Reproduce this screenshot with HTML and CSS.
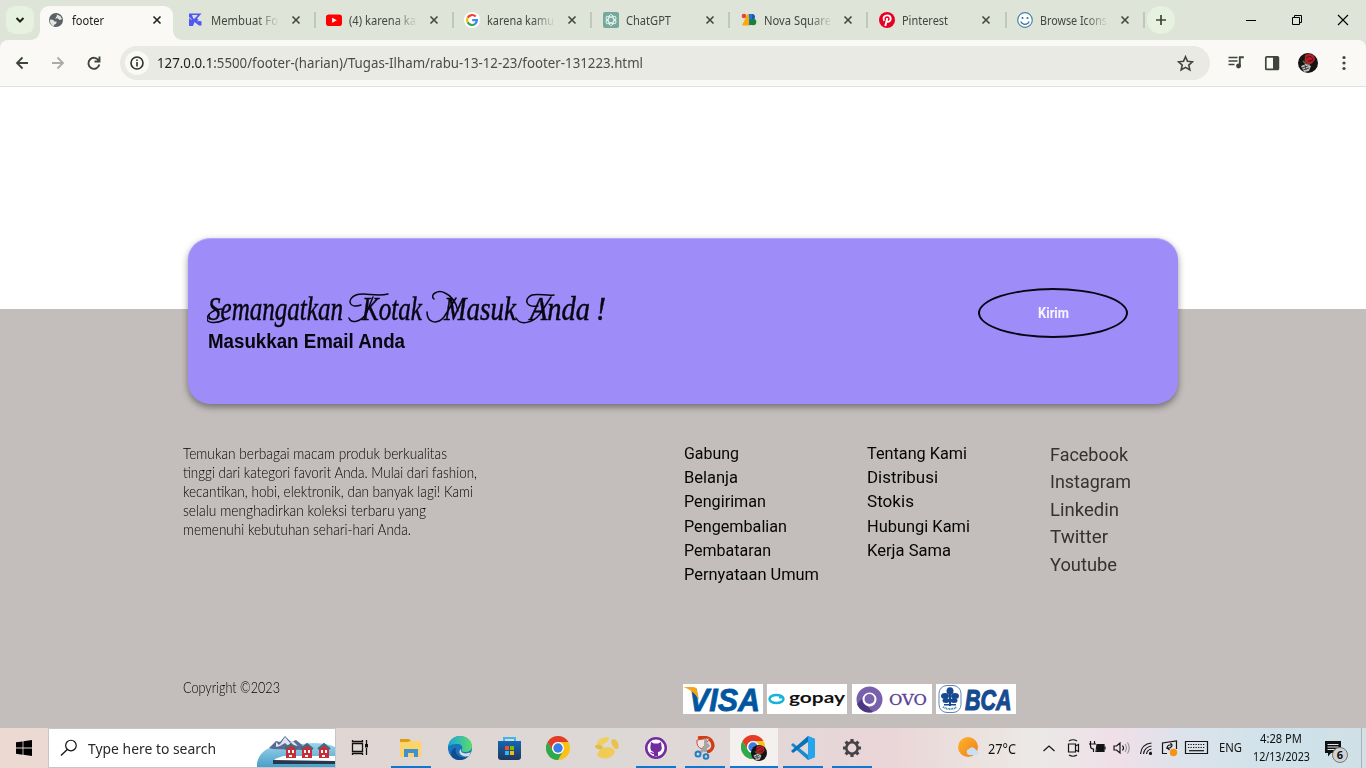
FILE: index.html
```html
<!DOCTYPE html>
<html lang="id">
<head>
<meta charset="utf-8">
<title>footer</title>
<link rel="stylesheet" href="styles.css">
</head>
<body>
<svg class="defs" width="0" height="0" aria-hidden="true">
  <defs>
    <symbol id="x" viewBox="0 0 10 10"><path d="M1.500 1.500l7 7M8.500 1.500l-7 7" stroke="currentColor" stroke-width="1.600" fill="none"/></symbol>
    <symbol id="chrome" viewBox="0 0 24 24">
      <circle cx="12" cy="12" r="12" fill="#fbc116"/>
      <path d="M1.600 6A12 12 0 0 1 22.400 6H12a6 6 0 0 0-5.200 9z" fill="#e33b2e"/>
      <path d="M1.600 6A12 12 0 0 0 12 24l5.200-9A6 6 0 0 1 6.800 15z" fill="#2da94f"/>
      <circle cx="12" cy="12" r="6" fill="#fff"/><circle cx="12" cy="12" r="4.700" fill="#3a7de8"/>
    </symbol>
    <symbol id="rose" viewBox="0 0 20 20">
      <circle cx="10" cy="10" r="10" fill="#151314"/>
      <path d="M7 2l4-1.500 5 2 1 4-3 4-4 1-3.500-3z" fill="#b3202a"/>
      <path d="M8 5l4-2 3 3-3 3M10 8l5-1" stroke="#5e0d14" fill="none"/>
      <path d="M5 8l3 3 4 1" stroke="#3f7a37" stroke-width="1.500" fill="none"/>
      <path d="M3 13l5-2 5 2-2 5-5 1z" fill="#bdbabd"/>
      <path d="M4 15l6-2M5 17l6-2M7 12l1 5" stroke="#3b393b" stroke-width=".9"/>
    </symbol>
    <linearGradient id="gEdge" x1="0" y1="0" x2="1" y2="0"><stop offset="0" stop-color="#1aa5dc"/><stop offset="1" stop-color="#5bdc6b"/></linearGradient>
    <linearGradient id="gSun" x1="0" y1="0" x2="1" y2="1"><stop offset="0" stop-color="#fdb52a"/><stop offset="1" stop-color="#f07e1b"/></linearGradient>
    <linearGradient id="gLake" x1="0" y1="0" x2="0" y2="1"><stop offset="0" stop-color="#9ad4ea"/><stop offset="1" stop-color="#4b9fca"/></linearGradient>
    <linearGradient id="gStore" x1="0" y1="0" x2="0" y2="1"><stop offset="0" stop-color="#1267b5"/><stop offset="1" stop-color="#20365c"/></linearGradient>
  </defs>
</svg>

<header class="tabstrip">
  <button class="tab-search"><svg width="10" height="8" viewBox="0 0 10 8"><path d="M1.500 2L5 5.500 8.500 2" fill="none" stroke="#1d211c" stroke-width="2"/></svg></button>
  <div class="tab tab-active">
    <svg class="fav" viewBox="0 0 16 16"><circle cx="8" cy="8" r="7" fill="#5b6066"/><path d="M8.500 1.500L6.500 4l1.800 1.500L6 7.500 2 7l.5 2.500L6 10l1 4.500 2-2.500.5-2.500-2-1.700" fill="none" stroke="#5b6066"/><path d="M1.800 7.500l3 .3 2 1.700h2L8 12l-2 .8v1.500C3.500 13.500 1.600 11 1.800 7.500zM9 2.500l3.500 1.700 1.500 3-2.500.8-2-1.800-2.500.5 1.500-2z" fill="#e4e4e1"/></svg>
    <span class="title"><span class="fit" data-w="32">footer</span></span><svg class="close"><use href="#x"/></svg>
  </div>
  <div class="tab">
    <svg class="fav" viewBox="0 0 16 16"><path d="M1 1.500h12.500L9 6.500l3 2.500 1.500.5v4H11l-4.500-3.500L5 14H1z" fill="#5157f5"/><path d="M4.500 3.500H9L6 6.500zM1 5.500l2.500 2M9.500 9l3-1" stroke="#dfe4d9" fill="#dfe4d9" stroke-width="1"/></svg>
    <span class="title fade"><span class="fit" data-w="67">Membuat Fo</span></span><svg class="close"><use href="#x"/></svg>
  </div>
  <div class="tab">
    <svg class="fav" viewBox="0 0 16 16"><rect y="2.500" width="16" height="11.500" rx="2.800" fill="#f00"/><path d="M6.200 5.800v5L10.800 8.300z" fill="#fff"/></svg>
    <span class="title fade"><span class="fit" data-w="67">(4) karena ka</span></span><svg class="close"><use href="#x"/></svg>
  </div>
  <div class="tab">
    <svg class="fav" viewBox="0 0 16 16"><circle cx="8" cy="8" r="8" fill="#fff"/><g fill="none" stroke-width="2.200"><path d="M3.700 5.700A4.900 4.900 0 0 1 11.700 4.600" stroke="#ea4335"/><path d="M3.700 5.600a5 5 0 0 0 0 4.800" stroke="#fbbc05"/><path d="M3.600 10.300a4.900 4.900 0 0 0 7.600 1.500" stroke="#34a853"/><path d="M11 11.900A4.800 4.800 0 0 0 12.900 8.200H8.200" stroke="#4285f4"/></g></svg>
    <span class="title fade"><span class="fit" data-w="67">karena kamu</span></span><svg class="close"><use href="#x"/></svg>
  </div>
  <div class="tab">
    <svg class="fav" viewBox="0 0 16 16"><rect width="16" height="16" rx="2" fill="#74a99b"/><g fill="none" stroke="#e9f3ef" stroke-width=".9"><ellipse cx="8" cy="8" rx="2.700" ry="5.500"/><ellipse cx="8" cy="8" rx="2.700" ry="5.500" transform="rotate(60 8 8)"/><ellipse cx="8" cy="8" rx="2.700" ry="5.500" transform="rotate(120 8 8)"/></g></svg>
    <span class="title"><span class="fit" data-w="45">ChatGPT</span></span><svg class="close"><use href="#x"/></svg>
  </div>
  <div class="tab">
    <svg class="fav" viewBox="0 0 16 16"><circle cx="3" cy="4" r="2.300" fill="#ea4335"/><path d="M6.500 2H9v11.500H1z" fill="#f9ab00"/><path d="M8 2h4v6H8z" fill="#1a73e8"/><path d="M11 2a3 3 0 0 1 0 6z" fill="#1558c0"/><path d="M8 7h4v6H8z" fill="#1a73e8"/><circle cx="12" cy="10" r="3.300" fill="#188038"/></svg>
    <span class="title fade"><span class="fit" data-w="67">Nova Square</span></span><svg class="close"><use href="#x"/></svg>
  </div>
  <div class="tab">
    <svg class="fav" viewBox="0 0 16 16"><circle cx="8" cy="8" r="8" fill="#e60023"/><path d="M5 8.800C3.500 5.500 5.500 3.400 8.200 3.400c4.600 0 4.300 6.300 1 6.300-1.200 0-1.500-.8-1.500-.8M8.300 6L6.300 14" fill="none" stroke="#fff" stroke-width="1.900"/></svg>
    <span class="title"><span class="fit" data-w="46">Pinterest</span></span><svg class="close"><use href="#x"/></svg>
  </div>
  <div class="tab">
    <svg class="fav" viewBox="0 0 16 16"><circle cx="8" cy="8" r="7.300" fill="#fff" stroke="#4585ab" stroke-width="1.200"/><circle cx="5.500" cy="6" r="1.100" fill="#39789f"/><circle cx="10.500" cy="6" r="1.100" fill="#39789f"/><path d="M3.800 9.500c1.500 3.700 6.900 3.700 8.400 0" fill="none" stroke="#39789f" stroke-width="1.200"/></svg>
    <span class="title fade"><span class="fit" data-w="67">Browse Icons</span></span><svg class="close"><use href="#x"/></svg>
  </div>
  <button class="new-tab"><svg width="12" height="12" viewBox="0 0 12 12"><path d="M6 1v10M1 6h10" stroke="#3c4439" stroke-width="1.700"/></svg></button>
  <div class="win">
    <svg width="46" height="40"><path d="M18 20.500h10" stroke="#000"/></svg>
    <svg width="46" height="40"><path d="M18.500 17.500h7v7h-7zM20.500 17v-1.500h7v7H26" fill="none" stroke="#000"/></svg>
    <svg width="46" height="40"><path d="M18 15l10 10M28 15L18 25" stroke="#000" stroke-width="1.100"/></svg>
  </div>
</header>

<nav class="toolbar">
  <svg class="tool" viewBox="0 0 36 36"><path d="M28 18H17.500M22.500 12.500L17 18l5.500 5.500" fill="none" stroke="#3e463c" stroke-width="1.800"/></svg>
  <svg class="tool" viewBox="0 0 36 36"><path d="M16 18h11M21.500 12.500L27 18l-5.500 5.500" fill="none" stroke="#aaada7" stroke-width="1.800"/></svg>
  <svg class="tool" viewBox="0 0 36 36"><path d="M26.700 15.600A5.500 5.500 0 1 0 27.300 19.500M27.500 11.500v5h-5" fill="none" stroke="#3e463c" stroke-width="1.900"/></svg>
  <div class="omnibox">
    <span class="info"><svg width="14" height="14" viewBox="0 0 14 14"><circle cx="7" cy="7" r="6" fill="none" stroke="#2b302a" stroke-width="1.600"/><path d="M7 6v4.500M7 3.500v1.500" stroke="#2b302a" stroke-width="1.600"/></svg></span>
    <span class="url"><span class="fit" data-w="486"><b>127.0.0.1</b>:5500/footer-(harian)/Tugas-Ilham/rabu-13-12-23/footer-131223.html</span></span>
    <svg class="star" viewBox="0 0 16 16"><path d="M8 1.600l1.900 4.300 4.700.5-3.500 3.100 1 4.600L8 11.700l-4.100 2.400 1-4.600L1.400 6.400l4.700-.5z" fill="none" stroke="#3e463c" stroke-width="1.500"/></svg>
  </div>
  <div class="actions">
    <svg viewBox="0 0 36 36"><path d="M10.500 12.500h9M10.500 16h9M10.500 19.500h6" stroke="#3e463c" stroke-width="1.600"/><path d="M21.800 22V12.300h4" stroke="#3e463c" stroke-width="1.900" fill="none"/><circle cx="20.500" cy="21" r="2.400" fill="#3e463c"/></svg>
    <svg viewBox="0 0 36 36"><rect x="11.800" y="11.800" width="12.600" height="12.600" rx="1" fill="none" stroke="#3e463c" stroke-width="1.700"/><path d="M19 11h5v14h-5z" fill="#3e463c"/></svg>
    <svg viewBox="0 0 36 36"><use href="#rose" x="8" y="8" width="20" height="20"/></svg>
    <svg viewBox="0 0 36 36"><g fill="#3e463c"><circle cx="18" cy="12.500" r="1.600"/><circle cx="18" cy="18" r="1.600"/><circle cx="18" cy="23.500" r="1.600"/></g></svg>
  </div>
</nav>

<main class="page">
  <section class="card">
    <div>
      <h1 class="headline">
        <svg class="swash" viewBox="207 288 400 42" fill="none" stroke="#070612" stroke-width="1.500" stroke-linecap="round"><path d="M222 309c-9 0-15 6-15 10 0 4 9 5 17 1"/><path d="M349 318c2 6 12 4 17-4l7-17M361 305c-12 4-15-6-5-10 8-3 20 2 32-1"/><path d="M427 312c0 11 10 13 17 5l12-19M434 299c-5-4 4-10 11-6 7 3 11 9 13 18"/><path d="M516 318c4 8 17 5 24-4l11-17M538 306c-12 2-15-7-6-11 6-2 14 1 22 0"/></svg>
        <span class="fit" data-w="135" data-gap="19">Semangatkan</span><span class="fit" data-w="60" data-gap="22">Kotak</span><span class="fit" data-w="72" data-gap="14">Masuk</span><span class="fit" data-w="60" data-gap="6">Anda</span><span class="fit" data-w="10">!</span></h1>
      <p class="prompt"><span class="fit" data-w="197">Masukkan Email Anda</span></p>
    </div>
    <button class="send"><span class="fit" data-w="31">Kirim</span></button>
  </section>
  <footer class="footer">
    <p class="about">
      <span class="fit" data-w="264">Temukan berbagai macam produk berkualitas</span>
      <span class="fit" data-w="294">tinggi dari kategori favorit Anda. Mulai dari fashion,</span>
      <span class="fit" data-w="290">kecantikan, hobi, elektronik, dan banyak lagi! Kami</span>
      <span class="fit" data-w="243">selalu menghadirkan koleksi terbaru yang</span>
      <span class="fit" data-w="228">memenuhi kebutuhan sehari-hari Anda.</span>
    </p>
    <ul class="links">
      <li><a class="fit" data-w="55">Gabung</a></li><li><a class="fit" data-w="54">Belanja</a></li><li><a class="fit" data-w="82">Pengiriman</a></li><li><a class="fit" data-w="103">Pengembalian</a></li><li><a class="fit" data-w="87">Pembataran</a></li><li><a class="fit" data-w="135">Pernyataan Umum</a></li>
    </ul>
    <ul class="links">
      <li><a class="fit" data-w="100">Tentang Kami</a></li><li><a class="fit" data-w="71">Distribusi</a></li><li><a class="fit" data-w="47">Stokis</a></li><li><a class="fit" data-w="103">Hubungi Kami</a></li><li><a class="fit" data-w="84">Kerja Sama</a></li>
    </ul>
    <ul class="links social">
      <li><a class="fit" data-w="78">Facebook</a></li><li><a class="fit" data-w="81">Instagram</a></li><li><a class="fit" data-w="69">Linkedin</a></li><li><a class="fit" data-w="58">Twitter</a></li><li><a class="fit" data-w="67">Youtube</a></li>
    </ul>
    <p class="copy"><span class="fit" data-w="97">Copyright ©2023</span></p>
    <div class="pay">
      <svg viewBox="0 0 80 30"><rect width="80" height="30" fill="#fff"/><text x="6" y="26.500" font-size="32" font-weight="700" font-style="italic" textLength="71" lengthAdjust="spacingAndGlyphs" fill="#0057a0" stroke="#0057a0" stroke-width=".8" class="sans">VISA</text><path d="M0 3h10c3 0 4 2 4.500 5l1.500 8C12 9 7 5 0 3z" fill="#f9a51a"/></svg>
      <svg viewBox="0 0 80 30"><rect width="80" height="30" fill="#fff"/><ellipse cx="9.500" cy="15" rx="7" ry="4" fill="#fff" stroke="#12b5d8" stroke-width="2.500"/><path d="M12 12.500h3v2h-3z" fill="#12b5d8"/><text x="22" y="18.500" font-size="14.500" font-weight="700" textLength="56" lengthAdjust="spacingAndGlyphs" fill="#111" class="geo">gopay</text></svg>
      <svg viewBox="0 0 80 30"><rect width="80" height="30" fill="#fff"/><circle cx="17.500" cy="15.500" r="10" fill="none" stroke="#7860ac" stroke-width="6"/><path d="M5 20a13 13 0 0 0 16 8l-6-6a8 8 0 0 1-5-7z" fill="#4b3880"/><circle cx="17.500" cy="15" r="5" fill="#7a63ae"/><text x="37" y="20.500" font-size="14" textLength="38" lengthAdjust="spacingAndGlyphs" fill="#5b4195" stroke="#5b4195" stroke-width=".3" class="slab">OVO</text></svg>
      <svg viewBox="0 0 80 30"><rect width="80" height="30" fill="#fff"/><rect x="3" y="1.500" width="22" height="27" rx="8" fill="#fff" stroke="#4c78ad" stroke-width=".9"/><g fill="#174a90"><ellipse cx="14" cy="7" rx="3.500" ry="3.800"/><ellipse cx="9" cy="12" rx="4" ry="3"/><ellipse cx="19" cy="12" rx="4" ry="3"/><ellipse cx="10" cy="16.500" rx="3.500" ry="2.500"/><ellipse cx="18" cy="16.500" rx="3.500" ry="2.500"/><path d="M13 8h2v14h-2zM8 20h12v1.500H8z"/></g><path d="M7 23q7 4 14 0" fill="none" stroke="#4c78ad" stroke-dasharray="1 .6" stroke-width="1.800"/><text x="29" y="26.300" font-size="30" font-weight="700" font-style="italic" textLength="46.500" lengthAdjust="spacingAndGlyphs" fill="#164b91" stroke="#164b91" stroke-width="1.200" class="sans">BCA</text></svg>
    </div>
  </footer>
</main>

<div class="taskbar">
  <div class="start"><svg width="16" height="16" viewBox="0 0 16 16"><path d="M0 2.300L6.600 1.400v6.200H0zM7.400 1.300L16 0v7.600H7.400zM0 8.400h6.600v6.300L0 13.800zM7.400 8.400H16V16l-8.600-1.200z"/></svg></div>
  <div class="search">
    <svg width="18" height="18" viewBox="0 0 18 18"><circle cx="11" cy="6.500" r="5.300" fill="none" stroke="#111" stroke-width="1.200"/><path d="M7.300 10.500L1 16.500" stroke="#111" stroke-width="1.300"/></svg>
    <span class="hint"><span class="fit" data-w="128">Type here to search</span></span>
    <svg class="art" viewBox="0 0 78 38"><path d="M0 38V34C2 24 9 19 20 17l36-3q14 0 22 4v20z" fill="url(#gLake)"/><path d="M12 19L19 12l4 1 5-6 6 6 5-2 5 4 5 5-3 1-30-1z" fill="#596b91"/><path d="M19 13l3 3 2-2 4-6 5 6 3-2 5 5-5-1-3 2-5-4-5 3-4 1z" fill="#dde5f1"/><path d="M18 30l8-3h52v5H17z" fill="#fff"/><path d="M16 31l62 1v3H16z" fill="#26384e"/><path d="M29 20l5-4 5 4v9H29zM45 20l5-4 5 4v9H45zM62 20l5-4 5 4v9H62z" fill="#ca2c38"/><path d="M28 20l6-5 6 5M44 20l6-5 6 5M61 20l6-5 6 5" fill="none" stroke="#386d82" stroke-width="2"/><path d="M31 21h2v3h-2zM35 21h2v3h-2zM47 21h2v3h-2zM51 21h2v3h-2zM64 21h2v3h-2zM68 21h2v3h-2zM32 26h3v2h-3zM48 26h3v2h-3zM65 26h3v2h-3z" fill="#fff"/></svg>
  </div>
  <div class="app view"><svg width="18" height="18" viewBox="0 0 18 18" fill="none" stroke="#111" stroke-width="1.300"><path d="M1.500 4.500h10v8h-10zM1.500 1v1.500h10V1M1.500 16v-1.500h10V16M15.500 1v4M15.500 9v7"/><path d="M14 5h3v3.500h-3z" fill="#111" stroke="none"/></svg></div>
  <div class="app run"><svg width="24" height="24" viewBox="0 0 24 24"><path d="M1 3h9l2 2v3H1z" fill="#dc9c13"/><path d="M1 6h8l2-1h11v16H1z" fill="#fcd469"/><path d="M5 21v-8h14v8h-4v-4h-6v4z" fill="#3f91d0"/></svg></div>
  <div class="app"><svg width="24" height="24" viewBox="0 0 24 24"><circle cx="12" cy="12" r="12" fill="#1875bd"/><path d="M0 11C1 4 6 0 12 0c7 0 12 5 12 10 0 4-3 6-7 6-3 0-4-1-3-3 1-3-1-5-5-5-4 0-8 1-9 3z" fill="url(#gEdge)"/><path d="M8 12c-2 6 4 11 11 9-4 4-10 4-14 1-4-4-1-10 3-10z" fill="#134b90"/><path d="M13 13c-1 4 4 6 10 3l-2 4c-8 2-12-4-8-7z" fill="#dfdad9"/></svg></div>
  <div class="app"><svg width="24" height="24" viewBox="0 0 24 24"><path d="M7 6V2h11v4" fill="none" stroke="#40b6ef" stroke-width="2"/><path d="M1 5h23v16q0 3-3 3H4q-3 0-3-3z" fill="url(#gStore)"/><path d="M8 10h4v4H8z" fill="#f25022"/><path d="M13 10h4v4h-4z" fill="#7fba00"/><path d="M8 15h4v4H8z" fill="#36b4f1"/><path d="M13 15h4v4h-4z" fill="#ffb900"/></svg></div>
  <div class="app"><svg width="24" height="24"><use href="#chrome"/></svg></div>
  <div class="app"><svg width="24" height="24" viewBox="0 0 24 24"><ellipse cx="8" cy="5" rx="6.500" ry="3" transform="rotate(-28 8 5)" fill="#efd05f"/><ellipse cx="4" cy="11" rx="4" ry="2.300" transform="rotate(15 4 11)" fill="#e5bd46"/><ellipse cx="20" cy="8" rx="3" ry="5.500" transform="rotate(-28 20 8)" fill="#e8c24b"/><path d="M2 20c1-6 6-9 11-9 6 1 8 4 6 7-4 5-10 6-17 2z" fill="#f0cc57"/></svg></div>
  <div class="app run"><svg width="22" height="22" viewBox="0 0 22 22"><circle cx="11" cy="11" r="11" fill="#752ba0"/><circle cx="11" cy="11" r="8.500" fill="#fff"/><path d="M6 5l3 1.500h4L16 5l.5 4c1 4-1 5.500-3.500 6v4H9v-2c-2 .5-3-1-4-2 2 0 2 1 4 .5V15c-3-.5-4-3-3.500-6z" fill="#752ba0"/></svg></div>
  <div class="app run"><svg width="22" height="24" viewBox="0 0 22 24"><path d="M4 2q14-3 15 8-1 5-6 6" fill="none" stroke="#d23c13" stroke-width="3.300"/><path d="M3 4q-1 7 5 9l8-11z" fill="#e9e6e7" stroke="#cf4c2c"/><path d="M10 4l3-2v14h-3zM6 15L14 7l2 3-8 7z" fill="#a4a6aa"/><circle cx="4" cy="18" r="2.500" fill="none" stroke="#1b80c5" stroke-width="2"/><circle cx="12" cy="20.500" r="2.300" fill="none" stroke="#1b80c5" stroke-width="2"/></svg></div>
  <div class="app run current"><svg width="26" height="26" viewBox="0 0 26 26"><use href="#chrome" width="24" height="24"/><use href="#rose" x="10" y="10" width="16" height="16"/></svg></div>
  <div class="app run"><svg width="24" height="24" viewBox="0 0 24 24"><path d="M17 0l7 3v18l-7 3L0 9l2-2 15 12z" fill="#1589d2"/><path d="M0 15L17 0v6L2 17z" fill="#0872b9"/><path d="M17 0l7 3v18l-7 3z" fill="#26a4ec"/><path d="M17 6.500v11L10 12z" fill="#e2d8da"/></svg></div>
  <div class="app run"><svg width="20" height="20" viewBox="0 0 20 20"><circle cx="10" cy="10" r="5.700" fill="none" stroke="#454346" stroke-width="2.600"/><path d="M10 1v3M10 16v3M1 10h3M16 10h3M3.600 3.600l2.200 2.200M14.200 14.200l2.200 2.200M3.600 16.400l2.200-2.200M14.200 5.800l2.200-2.200" stroke="#454346" stroke-width="3.200"/></svg></div>
  <div class="weather"><svg width="22" height="22" viewBox="0 0 22 22"><circle cx="10" cy="10" r="10" fill="url(#gSun)"/><path d="M9 16a3 3 0 0 1 2-4 4 4 0 0 1 7 1 2.800 2.800 0 0 1 1 5h-8q-2 0-2-2z" fill="#cadef6"/></svg><span class="deg"><span class="fit" data-w="28">27°C</span></span></div>
  <svg class="tray" viewBox="0 0 170 40" fill="none" stroke="#151515" stroke-width="1.200">
    <path d="M3.500 23l5.500-5 5.500 5"/>
    <path d="M28.500 16h7v8h-7zM35.500 18l3-1.500v7l-3-1.500M29 13q4-2.500 8 0M29 27q4 2.500 8 0"/>
    <path d="M50.500 16v2q0 3 3 3v3M49 16h7M50.500 13v3M54.500 13v3M57 16.500h7v7h-8z"/><path d="M57.500 17.500h6v5h-6z" fill="#111"/><path d="M65 18.500v3"/>
    <path d="M74 18h2.500l3.500-3v10l-3.500-3H74zM82.500 17.500q2 2.500 0 5"/><path d="M85 16q3 4 0 8M87.500 14.500q3.500 5.500 0 11" stroke="#999"/>
    <path d="M100.500 26q1-10 11-11M103.500 26q1-7 8-8M106.500 26q.5-4 5-5M109.500 26q.5-2 2-2"/><circle cx="110.500" cy="25.500" r="1" fill="#111"/>
    <path d="M127 25.500h-4.500V15l14-2v8M122.500 15v10.500M127 21q0-4 3-4h2l-1.500-2M132 18l-2 2h-2.500l2 2"/><circle cx="133.500" cy="24.500" r="3.700" fill="#f7930d" stroke="none"/>
    <path d="M145.500 13.500h22v12h-22z"/><path d="M148 16.500h17M148 19.500h17" stroke-dasharray="1.300 1.200"/><path d="M149 22.700h15"/>
  </svg>
  <div class="lang"><span class="fit" data-w="23">ENG</span></div>
  <div class="clock"><span><span class="fit" data-w="42">4:28 PM</span></span><span class="date"><span class="fit" data-w="57">12/13/2023</span></span></div>
  <div class="notice"><svg width="16" height="16" viewBox="0 0 16 16"><path d="M0 0h16v12H6l-3 3.500V12H0z" fill="#111"/><path d="M2.500 3.500h11M2.500 6h11M2.500 8.500h7" stroke="#dfe8ed"/></svg><b class="count">6</b></div>
</div>
<script src="fit.js"></script>
</body>
</html>
```

FILE: styles.css
```css
* { box-sizing: border-box; }
body { margin: 0; width: 1366px; height: 768px; overflow: hidden; background: linear-gradient(#dfe4d9 0 60px, #fff 60px); display: flex; flex-direction: column; font-family: "Noto Sans", "Open Sans", sans-serif; }
button { border: 0; padding: 0; }
.defs { position: absolute; }
.fit { display: inline-block; white-space: pre; transform-origin: 0 50%; flex: none; }
.sans { font-family: "Liberation Sans", sans-serif; }
.geo { font-family: "Lato", sans-serif; }
.slab { font-family: "DejaVu Serif", serif; }

.tabstrip { height: 40px; flex: none; display: flex; align-items: center; }
.tab-search { width: 28px; height: 28px; margin: 0 6px; border-radius: 9px; background: #e6f2df; display: grid; place-items: center; }
.tab { width: 138.200px; height: 40px; display: flex; align-items: center; padding-left: 10.500px; font-size: 12px; color: #41483e; flex: none; background: linear-gradient(#bccab7, #bccab7) right 12px / 2px 16px no-repeat; }
.tab-active { width: 133px; height: 34px; align-self: flex-end; margin-right: 4.500px; padding-left: 8px; background: #faf9f5; border-radius: 9px 9px 0 0; color: #20241f; position: relative; }
.tab-active::before, .tab-active::after { content: ""; position: absolute; bottom: 0; width: 9px; height: 9px; }
.tab-active::before { left: -9px; background: radial-gradient(circle at 0 0, transparent 8.500px, #faf9f5 9px); }
.tab-active::after { right: -9px; background: radial-gradient(circle at 100% 0, transparent 8.500px, #faf9f5 9px); }
.tab-active .fav, .tab-active .close { transform: translateY(-3px); }
.fav { width: 16px; height: 16px; flex: none; }
.title { width: 70px; margin-left: 7px; margin-top: 2px; overflow: hidden; line-height: 18px; white-space: nowrap; }
.tab-active .title { width: 80px; margin-left: 8px; margin-top: -4px; }
.fade { -webkit-mask-image: linear-gradient(90deg, #000 65%, transparent 98%); mask-image: linear-gradient(90deg, #000 65%, transparent 98%); }
.close { width: 10px; height: 10px; margin-left: 9.500px; flex: none; }
.tab-active .close { margin-left: 0; }
.new-tab { width: 28px; height: 28px; margin-left: 2px; border-radius: 50%; background: #e6f2df; display: grid; place-items: center; }
.win { display: flex; margin-left: auto; }

.toolbar { height: 47px; flex: none; display: flex; align-items: center; background: #faf9f5; border-bottom: 1px solid #dfe1db; border-radius: 8px 8px 0 0; }
.tool { width: 36px; height: 36px; flex: none; }
.omnibox { width: 1090px; height: 34px; border-radius: 17px; background: #e9eae4; margin-left: 12px; display: flex; align-items: center; padding: 0 16px 0 5px; }
.info { width: 24px; height: 24px; border-radius: 50%; background: #faf9f5; display: grid; place-items: center; flex: none; }
.url { margin-left: 8px; width: 900px; font-size: 14px; line-height: 20px; color: #484e46; white-space: nowrap; }
.url b { font-weight: 400; color: #1c201b; }
.star { width: 17px; height: 17px; margin-left: auto; }
.actions { display: flex; margin-left: 8px; }
.actions svg { width: 36px; height: 36px; }

.page { height: 641px; flex: none; background: linear-gradient(#fff 0 222px, #c3bdbc 222px); padding-top: 151px; }
.card { width: 990px; height: 166px; margin: 0 auto; border-radius: 22px; background: #9e8df9; border-top: 1px solid #b4a7f8; box-shadow: 0 3px 7px rgba(0,0,0,.42); padding: 49px 50px 0 20px; display: flex; justify-content: space-between; }
.headline { margin: 0; height: 42px; display: flex; position: relative; font: italic 400 33px/42px "Liberation Serif", serif; -webkit-text-stroke: .5px #070612; color: #070612; }
.swash { position: absolute; left: -1px; top: 0; width: 400px; height: 42px; }
.prompt { margin: 0; font: 700 20px/22px "Liberation Sans", sans-serif; color: #08070d; }
.send { width: 150px; height: 50px; border: 2px solid #070612; border-radius: 50%; background: transparent; color: #f6f3ff; font: 700 14px/16px Roboto, sans-serif; padding: 0 0 0 57.500px; text-align: left; }
.footer { display: grid; grid-template-columns: 500px 183px 183px 200px; grid-template-rows: 240px 34px; padding-left: 183px; padding-top: 40px; }
.about, .copy { margin: 0; font: 300 15.500px/19px Lato, sans-serif; color: #000; }
.about .fit { display: block; width: max-content; }
.links { list-style: none; margin: -2px 0 0; padding: 0 0 0 .7px; font: 400 16.500px/24.200px Roboto, sans-serif; color: #050505; }
.links li { height: 24.200px; white-space: nowrap; }
.social { font-size: 19px; line-height: 27.500px; color: #343331; margin-top: -3.300px; }
.social li { height: 27.500px; }
.copy { margin-top: -6px; }
.pay { grid-column: 2 / 5; display: flex; gap: 4.400px; }
.pay svg { width: 80px; height: 30px; flex: none; }

.taskbar { height: 40px; flex: none; display: flex; background: linear-gradient(90deg, #ecd9d2 0, #e0d6d3 25%, #dcd8d6 45%, #e2d7d7 56%, #ead5d8 65%, #ebe3df 72%, #ebe9e7 76%, #efdfe8 82%, #dbe3eb 87%, #cfe2ea 94%, #d0e0e6); color: #111; }
.start { width: 48px; display: grid; place-items: center; flex: none; }
.search { width: 288px; border: 1px solid #c4c6c7; background: #fff; display: flex; align-items: center; padding-left: 11px; flex: none; overflow: hidden; }
.hint { margin-left: 10px; width: 170px; font-size: 15px; color: #292929; }
.art { width: 78px; height: 38px; flex: none; align-self: flex-end; }
.app { width: 49px; height: 40px; display: grid; place-items: center; flex: none; background: linear-gradient(#0b78d4, #0b78d4) center bottom / 0 2px no-repeat; }
.view { width: 50px; padding-right: 2px; }
.run { background-size: 40px 2px; }
.current { width: 48px; margin-left: 1px; background-color: #f4f0f0; background-size: 48px 2px; }
.weather { display: flex; align-items: center; margin-left: 82px; width: 76px; }
.deg { font-size: 14px; margin-left: 8px; }
.tray { width: 170px; height: 40px; margin-left: 6px; flex: none; }
.lang { width: 30px; margin-left: 9px; font-size: 12px; line-height: 40px; }
.clock { width: 62px; font-size: 12px; line-height: 18px; padding-top: 2px; display: grid; justify-content: start; height: 38px; }
.clock > span { padding-left: 11px; }
.clock > .date { padding-left: 3.500px; }
.notice { position: relative; padding: 12px 0 0 14px; width: 51px; border-right: 1px solid #a6b1b8; }
.count { position: absolute; left: 21px; top: 19px; width: 16px; height: 16px; border-radius: 50%; border: 1px solid #777; background: #d1d2d3; font: 700 11px/14px "Noto Sans", sans-serif; text-align: center; }
```

FILE: fit.js
```js
// Condense or widen each label to its design width, keeping its line height.
document.fonts.ready.then(() => {
  document.querySelectorAll(".fit").forEach((el) => {
    const target = Number(el.dataset.w);
    const gap = Number(el.dataset.gap || 0);
    const natural = el.getBoundingClientRect().width;
    el.style.transform = `scaleX(${target / natural})`;
    el.style.marginRight = `${target - natural + gap}px`;
  });
});
```
